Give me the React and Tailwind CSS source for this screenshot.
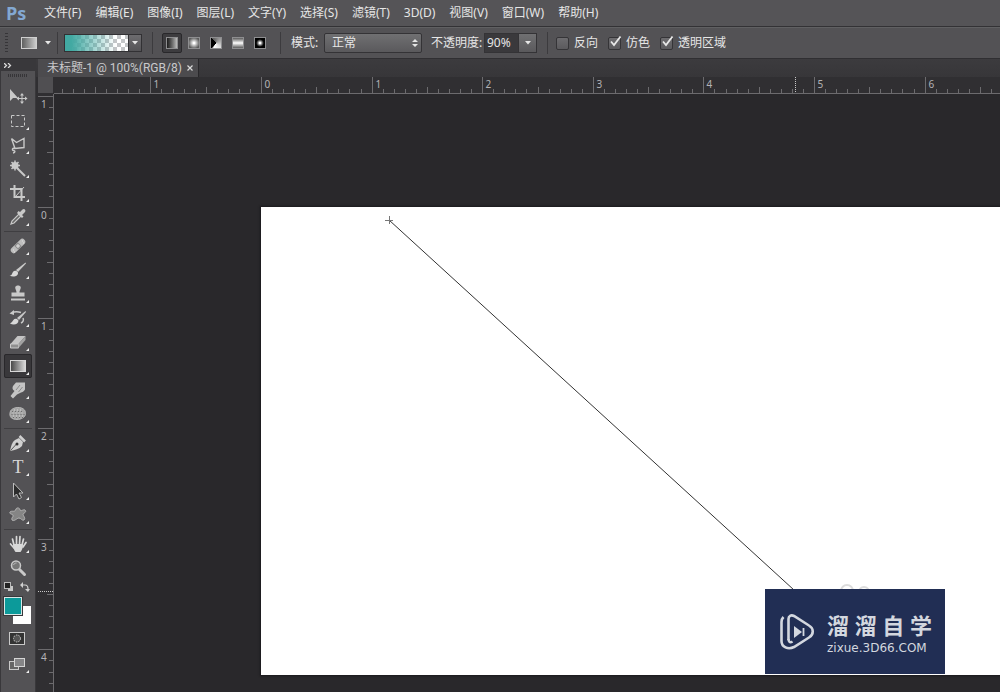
// App.jsx

/**
 * Image editor workspace: menu bar, gradient tool options, tool column,
 * document tab with rulers, and the canvas with a gradient being dragged.
 */

import { useEffect, useState } from "react";

const MENUS = [
  "文件(F)",
  "编辑(E)",
  "图像(I)",
  "图层(L)",
  "文字(Y)",
  "选择(S)",
  "滤镜(T)",
  "3D(D)",
  "视图(V)",
  "窗口(W)",
  "帮助(H)",
];

// Distance between two whole units on the rulers
const UNIT = 110.6;

/* ---------- tool drawings, all on a 28x24 box ---------- */

const TOOL_ICONS = {
  move: (
    <>
      <path d="M6 4v12l3-3h5z" fill="#c9c9c9" />
      <path d="M18 9v9M13.500 13.500h9" stroke="#c9c9c9" strokeWidth="1" />
      <path d="M18 8l2 2.500h-4zM18 19l2-2.500h-4zM12.500 13.500l2.500-2v4zM23.500 13.500l-2.500-2v4z" fill="#c9c9c9" />
    </>
  ),
  marquee: (
    <rect x="7.500" y="6.500" width="13" height="11" fill="none" stroke="#c9c9c9" strokeDasharray="3 2" />
  ),
  lasso: (
    <path
      d="M7.500 5.500l5 4 7.500-4v9l-9 1-3.500-10M11 15.500c-2.500-1-3.500 1.500-1.500 2s2 2-.5 2.500"
      fill="none"
      stroke="#c9c9c9"
      strokeWidth="1.400"
    />
  ),
  wand: (
    <>
      <path d="M13 11l8 8" stroke="#c9c9c9" strokeWidth="2" />
      <path d="M11 3.500v10M6 8.500h10M7.500 5l7 7M14.500 5l-7 7" stroke="#c9c9c9" strokeWidth="1.500" />
      <circle cx="11" cy="8.500" r="3.500" fill="#c9c9c9" />
    </>
  ),
  crop: (
    <>
      <path d="M10.500 4v12H21M6 8h11.500v12" fill="none" stroke="#c9c9c9" strokeWidth="2" />
      <path d="M12 15l8-9" stroke="#c9c9c9" strokeWidth="1" />
    </>
  ),
  eyedropper: (
    <>
      <path d="M7 19l1-3 7-7 2 2-7 7z" fill="#666" stroke="#c9c9c9" strokeWidth="1.200" />
      <path d="M13 8l5 5 1.500-1.500-1.500-1.500 3-3c1.500-2-1-4-2.500-2.500l-2.500 2.500-1.500-1z" fill="#c9c9c9" />
    </>
  ),
  healing: (
    <>
      <rect x="5" y="9" width="18" height="6" rx="3" fill="#bdbdbd" transform="rotate(-45 14 12)" />
      <rect x="11.500" y="9" width="5" height="6" fill="#8d8d8d" transform="rotate(-45 14 12)" />
      <path d="M14 10v4M12 12h4M9 16h1M18 7h1M10 18h1M19 9h1" stroke="#e4e4e4" />
    </>
  ),
  brush: (
    <>
      <path d="M21.500 4.500L12 12l2 2 8-8.500z" fill="#c9c9c9" />
      <path d="M12.500 13c-3-1-4 1.500-4.500 3-.5 1-1.500 1.500-2.500 1.500 3.500 2 9 1 8.500-3z" fill="#d8d8d8" />
    </>
  ),
  stamp: (
    <>
      <path d="M11.500 4.500c1-1.500 4-1.500 5 0 1 2-1 3.500-1 6h5v4h-13v-4h5c0-2.500-2-4-1-6z" fill="#c9c9c9" />
      <path d="M7 17.500h14" stroke="#c9c9c9" strokeWidth="2" />
    </>
  ),
  history: (
    <>
      <path d="M21.500 5L13 12l2 2 7-8z" fill="#c9c9c9" />
      <path d="M13 13c-3-1-4 1.500-5 3l-2 1.500c3.500 2 8.500 1 8.500-3z" fill="#d8d8d8" />
      <path d="M8 7c3-2 6-1.500 9-.5M19 12c1 2 0 4-2 5" fill="none" stroke="#c9c9c9" strokeWidth="1.500" />
      <path d="M5.500 7.500L10 4v5z" fill="#c9c9c9" />
    </>
  ),
  eraser: (
    <>
      <path d="M6.500 14l7-8h8l-7 8z" fill="#c4c4c4" />
      <path d="M6.500 14h8v4h-8z" fill="#8f8f8f" stroke="#c9c9c9" />
      <path d="M14.500 14l7-8v4l-7 8z" fill="#a2a2a2" />
    </>
  ),
  gradient: (
    <>
      <defs>
        <linearGradient id="toolGradient">
          <stop offset="0" stopColor="#444" />
          <stop offset="1" stopColor="#ddd" />
        </linearGradient>
      </defs>
      <rect x="6.500" y="6.500" width="15" height="11" fill="url(#toolGradient)" stroke="#d8d8d8" />
    </>
  ),
  smudge: (
    <>
      <path
        d="M6.500 18l4-5c-2-1-2.500-3-1.500-5l3-3.500h9v7c-1 2-3 3-4 3l-2 1-2 1-4 4z"
        fill="#c4c4c4"
      />
      <path d="M12 12l4-5M14.500 14l4-5" stroke="#8b8b8b" />
    </>
  ),
  sponge: (
    <>
      <path d="M6.500 9c2-4 11-5 14-1 2 3 1 7-2 8-3 2-8 2-11 0-2-2-2-4-1-7z" fill="#a5a5a5" stroke="#b4b4b4" />
      <path d="M8 9.500h12M7.500 12.500h13M9 15.500h10" stroke="#6c6c6c" strokeDasharray="1 2" />
      <path d="M10 8h9M8.500 11h12M9 14h10" stroke="#d4d4d4" strokeDasharray="1 2" />
    </>
  ),
  pen: (
    <>
      <path d="M6 20c1-5 2-9 5-11l4-2 4 4-1 4c-3 3-7 4-12 5z" fill="#d0d0d0" />
      <path d="M15.500 5l5.500 5.500" stroke="#d0d0d0" strokeWidth="2.500" />
      <path d="M6.500 19.500l6-6.500" stroke="#555" />
      <circle cx="13" cy="13" r="1.500" fill="#333" />
    </>
  ),
  type: (
    <text x="14" y="18" textAnchor="middle" fontSize="18" fontFamily="Liberation Serif, serif" fill="#d5d5d5">
      T
    </text>
  ),
  select: (
    <path d="M9.500 4v14l3-3 2.500 5 2.500-1.500-2.500-4.500h4z" fill="#2c2c2c" stroke="#bcbcbc" />
  ),
  shape: (
    <path
      d="M12 6c1-2 4-1 4 1 1 2 3-1 5 0 2 2-1 3-2 4 0 2 3 4 1 6-2 1-3-2-5-2s-5 4-7 2c-1-3 2-3 1-5-1-1-4-1-3-3 2-2 5 1 6-3z"
      fill="#858585"
      stroke="#b4b4b4"
    />
  ),
  hand: (
    <>
      <path
        d="M10 13L8.500 7M12.500 12V4.500M15.500 12l.5-7.500M18 13l1.500-6M6.500 12l3.500 4M22 10.500L19 15"
        stroke="#d8d8d8"
        strokeWidth="1.700"
        strokeLinecap="round"
      />
      <path d="M9 12h10c0 4-1 6-2.500 8h-5c-1.500-2-2.500-4-2.500-8z" fill="#d8d8d8" />
    </>
  ),
  zoom: (
    <>
      <path d="M15.500 13.500l5 5" stroke="#c9c9c9" strokeWidth="3" strokeLinecap="round" />
      <circle cx="12" cy="9.500" r="4.500" fill="#777" stroke="#c9c9c9" strokeWidth="1.500" />
      <path d="M9.500 9c.5-1.500 2-2 3-2" fill="none" stroke="#bbb" />
    </>
  ),
};

const TOOL_GROUPS = [
  ["move", "marquee", "lasso", "wand", "crop", "eyedropper"],
  ["healing", "brush", "stamp", "history", "eraser", "gradient", "smudge", "sponge"],
  ["pen", "type", "select", "shape"],
  ["hand", "zoom"],
];

const NO_FLYOUT = ["move", "zoom"];

function MenuBar() {
  return (
    <header className="flex h-[27px] items-center border-b border-[#333235] bg-[#555457] pl-[6px]">
      <span className="w-[38px] font-[family-name:'Open_Sans'] text-[18px] leading-[24px] font-bold text-[#83a8d2]">
        Ps
      </span>
      <nav className="flex gap-[14px]">
        {MENUS.map((label) => (
          <button key={label} className="text-[12px] leading-[18px] whitespace-nowrap">
            {label}
          </button>
        ))}
      </nav>
    </header>
  );
}

function Divider() {
  return <span className="h-[22px] w-px shrink-0 bg-[#3c3b3e]" />;
}

function Caret() {
  return (
    <svg width="6" height="4" viewBox="0 0 6 4" aria-hidden="true">
      <path d="M0 0h6L3 3.500z" fill="#e6e6e6" />
    </svg>
  );
}

function Check({ id, label, defaultChecked }) {
  const [checked, setChecked] = useState(Boolean(defaultChecked));
  return (
    <label htmlFor={id} className="flex items-center gap-[5px] whitespace-nowrap">
      <span className="relative flex">
        <input
          id={id}
          type="checkbox"
          checked={checked}
          onChange={(e) => setChecked(e.target.checked)}
          className="h-[13px] w-[13px] appearance-none rounded-[2px] border border-[#353437] bg-linear-to-b from-[#6d6c6f] to-[#5b5a5d]"
        />
        {checked && (
          <svg className="pointer-events-none absolute -top-1 left-0" width="15" height="15" viewBox="0 0 15 15">
            <path d="M3 8.500l3 3.500L12.500 3.500" fill="none" stroke="#e8e8e8" strokeWidth="1.800" />
          </svg>
        )}
      </span>
      {label}
    </label>
  );
}

// The five gradient kinds: linear, radial, angle, reflected, diamond
const GRADIENT_KINDS = [
  { name: "线性渐变", fill: "bg-linear-to-r from-[#1c1c1c] to-[#bdbdbd]" },
  { name: "径向渐变", fill: "bg-radial from-white from-10% to-[#5c5c5c] to-80%" },
  { name: "角度渐变", fill: "bg-[conic-gradient(from_-45deg,#555,#999_25%,#ddd_50%,#fff_70%,#000_75%,#000)]" },
  { name: "对称渐变", fill: "bg-linear-to-b from-[#5c5c5c] via-white to-[#5c5c5c]" },
  { name: "菱形渐变", fill: "bg-radial from-white from-10% to-black to-60%" },
];

function OptionsBar() {
  const [kind, setKind] = useState(0);
  return (
    <section className="flex h-[32px] items-center border-t border-b border-t-[#606062] border-b-[#302f32] bg-[#535255] pl-[5px] text-[12px]">
      <span className="h-[20px] w-[3px] bg-[repeating-linear-gradient(#363538_0_1px,transparent_1px_3px)]" />
      <button aria-label="渐变工具" className="ml-[13px] flex items-center gap-2">
        <span className="h-[12px] w-[16px] border border-[#cfcfcf] bg-linear-to-r from-[#606060] to-[#cccccc]" />
        <Caret />
      </button>
      <span className="w-[6px]" />
      <Divider />
      <div className="mx-[6px] flex h-[18px] border border-[#323134]">
        <button
          aria-label="渐变预览"
          className="w-[63px] bg-[conic-gradient(#c4c6c8_25%,#fff_0_50%,#c4c6c8_0_75%,#fff_0)] bg-[length:8px_8px]"
        >
          <span className="block h-[16px] bg-linear-to-r from-[#42a9a2] from-10% to-transparent to-80%" />
        </button>
        <button
          aria-label="渐变列表"
          className="flex w-[13px] items-center justify-center border-l border-[#323134] bg-linear-to-b from-[#6d6c6f] to-[#555457]"
        >
          <Caret />
        </button>
      </div>
      <span className="w-[4px]" />
      <Divider />
      <div className="mx-[9px] flex gap-[2px]">
        {GRADIENT_KINDS.map(({ name, fill }, i) => (
          <button
            key={name}
            aria-label={name}
            onClick={() => setKind(i)}
            className={
              i === kind
                ? "flex h-[20px] w-[20px] items-center justify-center rounded-[2px] border border-[#29282b] bg-[#3d3c3f]"
                : "flex h-[20px] w-[20px] items-center justify-center"
            }
          >
            <span className={`h-[12px] w-[12px] border border-[#8e8e90] ${fill}`} />
          </button>
        ))}
      </div>
      <span className="w-px" />
      <Divider />
      <label htmlFor="mode" className="ml-[10px] w-[33px] whitespace-nowrap">
        模式:
      </label>
      <div className="relative">
        <select
          id="mode"
          className="block h-[20px] w-[98px] appearance-none rounded-[2px] border border-[#343336] bg-linear-to-b from-[#707072] to-[#5a595c] pl-[7px] text-[12px] leading-[18px]"
        >
          <option>正常</option>
        </select>
        <svg className="pointer-events-none absolute top-[6px] right-[4px]" width="6" height="8" viewBox="0 0 6 8">
          <path d="M0 3h6L3 0zM0 5h6L3 8z" fill="#e6e6e6" />
        </svg>
      </div>
      <label htmlFor="opacity" className="ml-[9px] w-[53px] whitespace-nowrap">
        不透明度:
      </label>
      <div className="flex h-[20px] border border-[#343336]">
        <input
          id="opacity"
          defaultValue="90%"
          className="w-[33px] bg-[#3a393c] pl-[2px] text-[12px] leading-[18px]"
        />
        <button
          aria-label="不透明度滑块"
          className="flex w-[18px] items-center justify-center border-l border-[#343336] bg-linear-to-b from-[#707072] to-[#5a595c]"
        >
          <Caret />
        </button>
      </div>
      <span className="w-[10px]" />
      <Divider />
      <div className="ml-[8px] flex gap-[10px]">
        <Check id="reverse" label="反向" />
        <Check id="dither" label="仿色" defaultChecked />
        <Check id="transparency" label="透明区域" defaultChecked />
      </div>
    </section>
  );
}

function ToolButton({ name, active, onPick }) {
  return (
    <button
      aria-label={name}
      onClick={() => onPick(name)}
      className={
        active
          ? "h-[24px] w-[28px] rounded-[2px] bg-[#39383b] outline outline-[#29282b] -outline-offset-1"
          : "h-[24px] w-[28px]"
      }
    >
      <svg width="28" height="24" viewBox="0 0 28 24">
        {TOOL_ICONS[name]}
        {!NO_FLYOUT.includes(name) && <path d="M25 18v3h-3z" fill="#f0f0f0" />}
      </svg>
    </button>
  );
}

function Toolbar() {
  const [tool, setTool] = useState("gradient");
  return (
    <aside className="flex w-[36px] shrink-0 flex-col border-x border-[#39383b] bg-[#535255]">
      <button aria-label="展开面板" className="flex h-[12px] items-center bg-[#39383b] pl-[3px]">
        <svg width="8" height="5" viewBox="0 0 8 5">
          <path d="M0 0l2.500 2.500L0 5M4 0l2.500 2.500L4 5" fill="none" stroke="#dadada" strokeWidth="1.300" />
        </svg>
      </button>
      <span className="mx-auto mt-[3px] mb-[8px] h-[3px] w-[20px] bg-[repeating-linear-gradient(90deg,#363538_0_1px,transparent_1px_2px)]" />

      <div className="flex flex-col divide-y divide-[#3f3e41] px-[3px]">
        {TOOL_GROUPS.map((group) => (
          <div key={group[0]} className="flex flex-col pt-[2px] pb-[2px] first:pt-0 last:pb-0">
            {group.map((name) => (
              <ToolButton key={name} name={name} active={name === tool} onPick={setTool} />
            ))}
          </div>
        ))}
      </div>

      {/* Default / swap colours, then the two swatches */}
      <div className="mt-[2px] flex justify-between pr-[5px] pl-[3px]">
        <button aria-label="默认颜色">
          <svg className="block" width="10" height="10" viewBox="0 0 10 10">
            <rect x="4" y="4" width="5" height="5" fill="#c8c8c8" />
            <rect x=".5" y=".5" width="6" height="6" fill="#222" stroke="#bbb" />
          </svg>
        </button>
        <button aria-label="切换颜色">
          <svg className="block" width="10" height="10" viewBox="0 0 10 10">
            <path d="M2 3h3c2 0 3 1 3 4" fill="none" stroke="#d0d0d0" strokeWidth="1.200" />
            <path d="M0 3l3-3v6zM8 10L5 7h5z" fill="#d0d0d0" />
          </svg>
        </button>
      </div>
      <div className="relative mt-[5px] ml-[3px] h-[27px] w-[27px]">
        <button aria-label="背景色" className="absolute right-0 bottom-0 h-[18px] w-[18px] bg-white" />
        <button
          aria-label="前景色"
          className="absolute top-0 left-0 h-[18px] w-[18px] border border-[#d7e7e6] bg-[#0c9a9a] outline outline-[#39383b]"
        />
      </div>

      <button aria-label="快速蒙版" className="mt-[8px] ml-[8px] w-[16px]">
        <svg className="block" width="16" height="13" viewBox="0 0 16 13">
          <rect x=".5" y=".5" width="15" height="12" fill="#333" stroke="#c9c9c9" />
          <circle cx="8" cy="6.500" r="3.500" fill="#555" stroke="#c9c9c9" strokeDasharray="1.500 1" />
        </svg>
      </button>
      <button aria-label="屏幕模式" className="mt-[12px] ml-[8px] w-[20px]">
        <svg className="block" width="20" height="17" viewBox="0 0 20 17">
          <rect x=".5" y="4.500" width="9" height="8" fill="#666" stroke="#c9c9c9" />
          <rect x="5.500" y="1.500" width="10" height="8" fill="#858587" stroke="#d5d5d5" />
          <path d="M20 13v3h-3z" fill="#f0f0f0" />
        </svg>
      </button>
    </aside>
  );
}

// Ten ticks to a unit; the whole unit runs the full depth of the ruler
function buildTicks(zero, length) {
  const ticks = [];
  for (let i = -30; zero + (i * UNIT) / 10 < length; i++) {
    const pos = Math.round(zero + (i * UNIT) / 10) + 0.5;
    if (pos < 0) continue;
    const kind = i % 10 === 0 ? "unit" : i % 5 === 0 ? "half" : "minor";
    ticks.push({ pos, kind, value: Math.abs(i / 10) });
  }
  return ticks;
}

const DEPTH = { unit: 16, half: 6, minor: 4 };

function useWindowSize() {
  const read = () => ({ width: window.innerWidth, height: window.innerHeight });
  const [size, setSize] = useState(read);
  useEffect(() => {
    const onResize = () => setSize(read());
    window.addEventListener("resize", onResize);
    return () => window.removeEventListener("resize", onResize);
  }, []);
  return size;
}

function HorizontalRuler({ length }) {
  return (
    <svg className="block h-[17px] min-w-0 flex-1" aria-hidden="true">
      {buildTicks(207, length).map(({ pos, kind, value }) => (
        <g key={pos}>
          <path d={`M${pos} 16v${-DEPTH[kind]}`} stroke="#6c6b6e" />
          {kind === "unit" && (
            <text x={pos + 3} y="11" fontSize="10" fill="#b4b3b6">
              {value}
            </text>
          )}
        </g>
      ))}
      <path d={`M0 16.500h${length}`} stroke="#6c6b6e" />
      <path d="M741.500 0v16" stroke="#c8c8c8" strokeDasharray="1 1" />
    </svg>
  );
}

function VerticalRuler({ length }) {
  return (
    <div className="relative w-[16px] shrink-0 self-stretch">
      <svg className="absolute inset-0 h-full w-full" aria-hidden="true">
        {buildTicks(113, length).map(({ pos, kind, value }) => (
          <g key={pos}>
            <path d={`M15 ${pos}h${-DEPTH[kind]}`} stroke="#6c6b6e" />
            {kind === "unit" && (
              <text x="3" y={pos + 11} fontSize="10" fill="#b4b3b6">
                {value}
              </text>
            )}
          </g>
        ))}
        <path d={`M15.500 0v${length}`} stroke="#6c6b6e" />
        <path d="M0 497.500h15" stroke="#c8c8c8" strokeDasharray="1 1" />
      </svg>
    </div>
  );
}

function Watermark() {
  return (
    <div className="absolute right-[55px] bottom-px flex h-[85px] w-[180px] items-center gap-[12px] bg-[#212e54] pl-[15px] text-[#d3d7df]">
      <svg className="shrink-0" width="35" height="37" viewBox="0 0 35 37" fill="none" stroke="currentColor">
        <path
          d="M8.500 27V6c0-3 2.500-4.500 5.500-3l15 9.500c5 3 5 9 0 12L14 34c-6 3-12.500 0-12.500-6V9c0-2 .5-3.500 2-5"
          strokeWidth="2.600"
        />
        <path d="M8.500 26c0 3 1.500 4 4 2.500" strokeWidth="2.600" />
        <path d="M14 13v12l8-6z" fill="currentColor" stroke="none" />
        <path d="M23.500 15v8" strokeWidth="1.800" />
      </svg>
      <div className="w-[105px]">
        <p className="flex justify-between text-[22px] leading-[32px] font-bold">
          <span>溜</span>
          <span>溜</span>
          <span>自</span>
          <span>学</span>
        </p>
        <p className="font-[family-name:'DejaVu_Sans'] text-[12px] leading-[14px]">zixue.3D66.COM</p>
      </div>
    </div>
  );
}

function Canvas() {
  return (
    <main className="flex min-w-0 flex-1 bg-[#29282b] pt-[113px] pb-[17px] pl-[207px]">
      <div className="relative flex-1 overflow-hidden bg-white shadow-[0_0_2px_1px_#1a191c]">
        {/* Gradient drag line with its start cross */}
        <svg className="absolute top-0 left-0" width="620" height="400" viewBox="0 0 620 400" fill="none">
          <path d="M128 13l405 370" stroke="#333" />
          <path d="M124 13.500h8M128.500 9v8" stroke="#777" />
          <circle cx="586" cy="384" r="6" stroke="#dcdcdc" strokeWidth="2" />
          <circle cx="603" cy="385" r="5" stroke="#dcdcdc" strokeWidth="2" />
        </svg>
        <Watermark />
      </div>
    </main>
  );
}

export default function App() {
  const { width, height } = useWindowSize();
  return (
    <div className="flex min-h-screen flex-col overflow-hidden bg-[#302f32] font-['Noto_Sans','Noto_Sans_CJK_SC',sans-serif] text-[#e6e6e6]">
      <MenuBar />
      <OptionsBar />
      <div className="flex flex-1">
        <Toolbar />
        <div className="flex min-w-0 flex-1 flex-col">
          <div className="flex h-[18px] bg-linear-to-b from-[#3c3b3e] to-[#373639] pl-[2px]">
            <div className="flex items-center gap-[5px] border-r border-[#29282b] bg-[#4c4b4e] pr-[5px] pl-[9px] font-['Roboto','Noto_Sans_CJK_SC',sans-serif] text-[12px] leading-[20px] text-[#c9c9cb]">
              <span className="whitespace-nowrap">未标题-1 @ 100%(RGB/8)</span>
              <button aria-label="关闭">
                <svg className="block" width="6" height="6" viewBox="0 0 6 6">
                  <path d="M.5.5l5 5M5.500.5l-5 5" stroke="#dadada" strokeWidth="1.200" />
                </svg>
              </button>
            </div>
          </div>
          {/* The rulers start 54px from the left and 94px from the top of the window */}
          <div className="flex pl-[2px]">
            <span className="mr-px h-[16px] w-[15px] bg-[#504f52]" />
            <HorizontalRuler length={width - 54} />
          </div>
          <div className="flex flex-1 pl-[2px]">
            <VerticalRuler length={height - 94} />
            <Canvas />
          </div>
        </div>
      </div>
    </div>
  );
}
